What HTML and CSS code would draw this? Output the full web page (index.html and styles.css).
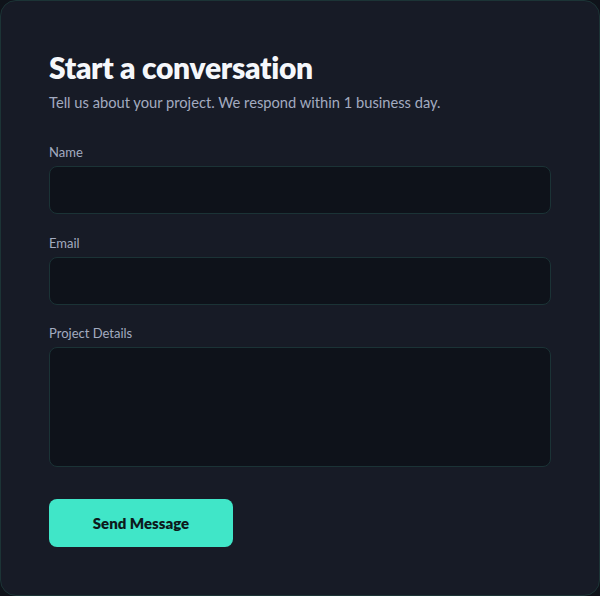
FILE: index.html
```html
<!DOCTYPE html>
<html lang="en">
<head>
<meta charset="utf-8">
<link rel="stylesheet" href="styles.css">
</head>
<body>
<form class="card">
  <h1 class="title">Start a conversation</h1>
  <p class="subtitle">Tell us about your project. We respond within 1 business day.</p>
  <div class="field">
    <label class="label" for="name">Name</label>
    <input class="input" id="name" type="text">
  </div>
  <div class="field">
    <label class="label" for="email">Email</label>
    <input class="input" id="email" type="email">
  </div>
  <div class="field">
    <label class="label" for="details">Project Details</label>
    <textarea class="input textarea" id="details"></textarea>
  </div>
  <button class="btn" type="button">Send Message</button>
</form>
</body>
</html>
```

FILE: styles.css
```css
* { box-sizing: border-box; }
html, body { margin: 0; background: #0f131a; }
body { width: 600px; height: 596px; font-family: "Lato", "Inter", sans-serif; }
.card {
  width: 600px;
  height: 596px;
  background: #171b26;
  border: 1px solid #1c3436;
  border-radius: 16px;
  padding: 48px 48px;
  display: flex;
  flex-direction: column;
  align-items: flex-start;
}
.title {
  margin: 0;
  font-size: 30px;
  line-height: 36px;
  font-weight: 800;
  color: #f5f7fb;
  letter-spacing: -0.3px;
}
.subtitle {
  margin: 6px 0 0;
  font-size: 14.7px;
  line-height: 22px;
  color: #a3abc0;
}
.field {
  width: 100%;
  display: flex;
  flex-direction: column;
  gap: 5px;
  margin-top: 20px;
}
.subtitle + .field { margin-top: 30px; }
.field + .field + .field { margin-top: 19px; }
.label {
  font-size: 13px;
  line-height: 18px;
  color: #a3abc0;
}
.input {
  width: 100%;
  height: 48px;
  background: #0e121a;
  border: 1px solid #1b3336;
  border-radius: 8px;
  outline: none;
  color: #e6e9f0;
  font: inherit;
  padding: 0 14px;
}
.textarea {
  height: 120px;
  resize: none;
  padding: 12px 14px;
}
.btn {
  margin-top: 32px;
  width: 184px;
  height: 48px;
  border: none;
  border-radius: 8px;
  background: #40e6c8;
  color: #0d1a1c;
  font-family: inherit;
  font-size: 15px;
  font-weight: 800;
}
```
